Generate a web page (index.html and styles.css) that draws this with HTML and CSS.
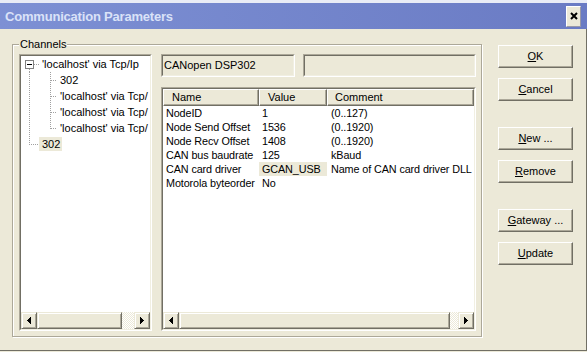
FILE: index.html
```
<!DOCTYPE html>
<html>
<head>
<meta charset="utf-8">
<link rel="stylesheet" href="styles.css">
</head>
<body>
<div class="window">
  <div class="titlebar">
    <span class="title">Communication Parameters</span>
    <span class="close"><svg width="8" height="8" viewBox="0 0 8 8"><path d="M1 1 L7 7 M7 1 L1 7" stroke="#000" stroke-width="2"/></svg></span>
  </div>
  <div class="main">
    <div class="group">
      <div class="group-label">Channels</div>
      <div class="group-body">
        <div class="tree sunken">
          <div class="sunken-in white">
            <div class="tree-items">
              <div class="node">
                <svg width="18" height="16" shape-rendering="crispEdges"><line x1="13" y1="8.5" x2="18" y2="8.5" class="dot"/><line x1="8.5" y1="13" x2="8.5" y2="16" class="dot"/><rect x="4.5" y="4.5" width="8" height="8" fill="#fff" stroke="#808080"/><rect x="6" y="8" width="5" height="1" fill="#000"/></svg>
                <span class="lbl">'localhost' via Tcp/Ip</span>
              </div>
              <div class="node">
                <svg width="36" height="16" shape-rendering="crispEdges"><line x1="8.5" y1="0" x2="8.5" y2="16" class="dot"/><line x1="29.5" y1="0" x2="29.5" y2="16" class="dot"/><line x1="30" y1="8.5" x2="36" y2="8.5" class="dot"/></svg>
                <span class="lbl">302</span>
              </div>
              <div class="node">
                <svg width="36" height="16" shape-rendering="crispEdges"><line x1="8.5" y1="0" x2="8.5" y2="16" class="dot"/><line x1="29.5" y1="0" x2="29.5" y2="16" class="dot"/><line x1="30" y1="8.5" x2="36" y2="8.5" class="dot"/></svg>
                <span class="lbl">'localhost' via Tcp/</span>
              </div>
              <div class="node">
                <svg width="36" height="16" shape-rendering="crispEdges"><line x1="8.5" y1="0" x2="8.5" y2="16" class="dot"/><line x1="29.5" y1="0" x2="29.5" y2="16" class="dot"/><line x1="30" y1="8.5" x2="36" y2="8.5" class="dot"/></svg>
                <span class="lbl">'localhost' via Tcp/</span>
              </div>
              <div class="node">
                <svg width="36" height="16" shape-rendering="crispEdges"><line x1="8.5" y1="0" x2="8.5" y2="16" class="dot"/><line x1="29.5" y1="0" x2="29.5" y2="9" class="dot"/><line x1="30" y1="8.5" x2="36" y2="8.5" class="dot"/></svg>
                <span class="lbl">'localhost' via Tcp/</span>
              </div>
              <div class="node">
                <svg width="18" height="16" shape-rendering="crispEdges"><line x1="8.5" y1="0" x2="8.5" y2="9" class="dot"/><line x1="10" y1="8.5" x2="18" y2="8.5" class="dot"/></svg>
                <span class="lbl sel">302</span>
              </div>
            </div>
            <div class="hscroll">
              <div class="sbtn"><svg width="4" height="7" shape-rendering="crispEdges"><rect x="0" y="3" width="1" height="1"/><rect x="1" y="2" width="1" height="3"/><rect x="2" y="1" width="1" height="5"/><rect x="3" y="0" width="1" height="7"/></svg></div>
              <div class="sbtn thumb-tree"></div>
              <div class="strack"></div>
              <div class="sbtn"><svg width="4" height="7" shape-rendering="crispEdges"><rect x="3" y="3" width="1" height="1"/><rect x="2" y="2" width="1" height="3"/><rect x="1" y="1" width="1" height="5"/><rect x="0" y="0" width="1" height="7"/></svg></div>
            </div>
          </div>
        </div>
        <div class="right">
          <div class="fields">
            <div class="field sunken"><div class="sunken-in field-in">CANopen DSP302</div></div>
            <div class="field wide sunken"><div class="sunken-in field-in"></div></div>
          </div>
          <div class="list sunken">
            <div class="sunken-in white">
              <div class="list-head">
                <div class="th c1">Name</div>
                <div class="th c2">Value</div>
                <div class="th c3">Comment</div>
              </div>
              <div class="rows">
                <div class="row"><div class="cell c1">NodeID</div><div class="cell c2">1</div><div class="cell c3">(0..127)</div></div>
                <div class="row"><div class="cell c1">Node Send Offset</div><div class="cell c2">1536</div><div class="cell c3">(0..1920)</div></div>
                <div class="row"><div class="cell c1">Node Recv Offset</div><div class="cell c2">1408</div><div class="cell c3">(0..1920)</div></div>
                <div class="row"><div class="cell c1">CAN bus baudrate</div><div class="cell c2">125</div><div class="cell c3">kBaud</div></div>
                <div class="row"><div class="cell c1">CAN card driver</div><div class="cell c2 hl">GCAN_USB</div><div class="cell c3">Name of CAN card driver DLL</div></div>
                <div class="row"><div class="cell c1">Motorola byteorder</div><div class="cell c2">No</div><div class="cell c3"></div></div>
              </div>
              <div class="hscroll">
                <div class="sbtn"><svg width="4" height="7" shape-rendering="crispEdges"><rect x="0" y="3" width="1" height="1"/><rect x="1" y="2" width="1" height="3"/><rect x="2" y="1" width="1" height="5"/><rect x="3" y="0" width="1" height="7"/></svg></div>
                <div class="sbtn thumb-list"></div>
                <div class="strack"></div>
                <div class="sbtn"><svg width="4" height="7" shape-rendering="crispEdges"><rect x="3" y="3" width="1" height="1"/><rect x="2" y="2" width="1" height="3"/><rect x="1" y="1" width="1" height="5"/><rect x="0" y="0" width="1" height="7"/></svg></div>
              </div>
            </div>
          </div>
        </div>
      </div>
    </div>
    <div class="buttons">
      <button class="btn"><u>O</u>K</button>
      <button class="btn"><u>C</u>ancel</button>
      <button class="btn sep"><u>N</u>ew ...</button>
      <button class="btn"><u>R</u>emove</button>
      <button class="btn sep"><u>G</u>ateway ...</button>
      <button class="btn"><u>U</u>pdate</button>
    </div>
  </div>
</div>
</body>
</html>
```
FILE: styles.css
```
body {
  margin: 0;
  background: #ece9d8;
  font: 11px/13px "Liberation Sans", Arial, sans-serif;
  color: #000;
}
.window {
  width: 587px;
  height: 351px;
  box-sizing: border-box;
  box-shadow: inset -1px -1px 0 #716f64;
}
.titlebar {
  height: 26px;
  border-top: 3px solid #e9ecf6;
  background: linear-gradient(to right, #7d90d4, #6a7bc4);
  display: flex;
  align-items: center;
  justify-content: space-between;
  padding: 0 6px 0 5px;
}
.title {
  font-weight: bold;
  font-size: 13px;
  letter-spacing: -0.2px;
  color: #dae2f8;
}
.close {
  width: 15px;
  height: 21px;
  box-sizing: border-box;
  background: #ece9d8;
  border: 1px solid;
  border-color: #fff #9a9aa8 #9a9aa8 #fff;
  display: flex;
  align-items: center;
  justify-content: center;
}
.close svg { display: block; }
.main {
  display: flex;
  align-items: flex-start;
  padding: 15px 0 0 12px;
}
.group {
  width: 470px;
  box-sizing: border-box;
  border: 1px solid #aca899;
  box-shadow: 1px 1px 0 #fff, inset 1px 1px 0 #fff;
  padding: 0 5px 5px 6px;
}
.group-label {
  width: max-content;
  margin-top: -7px;
  padding: 0 1px;
  background: #ece9d8;
  line-height: 13px;
}
.group-body {
  display: flex;
  gap: 9px;
  margin-top: 3px;
  height: 277px;
}
.sunken {
  box-sizing: border-box;
  border: 1px solid;
  border-color: #aca899 #fff #fff #aca899;
}
.sunken-in {
  height: 100%;
  box-sizing: border-box;
  border: 1px solid;
  border-color: #716f64 #f1efe2 #f1efe2 #716f64;
}
.white {
  background: #fff;
  display: flex;
  flex-direction: column;
}
.tree { width: 133px; }
.tree-items {
  flex: 1;
  overflow: hidden;
}
.node {
  height: 16px;
  display: flex;
  align-items: center;
  white-space: nowrap;
}
.node svg { flex: none; display: block; }
.dot {
  stroke: #a0a0a0;
  stroke-dasharray: 1 1;
}
.lbl {
  padding: 0 2px 0 3px;
  line-height: 14px;
}
.lbl.sel { background: #ece9d8; }
.hscroll {
  display: flex;
  height: 17px;
  flex: none;
}
.sbtn {
  width: 16px;
  flex: none;
  box-sizing: border-box;
  border: 1px solid;
  border-color: #ece9d8 #716f64 #716f64 #ece9d8;
  box-shadow: inset 1px 1px 0 #fff, inset -1px -1px 0 #aca899;
  background: #ece9d8;
  display: flex;
  align-items: center;
  justify-content: center;
}
.sbtn svg { display: block; }
.thumb-tree { width: 85px; }
.thumb-list { width: 271px; }
.strack {
  flex: 1;
  background: repeating-conic-gradient(#fff 0 25%, #ece9d8 0 50%) 0 0 / 2px 2px;
}
.right {
  width: 315px;
  display: flex;
  flex-direction: column;
}
.fields {
  display: flex;
  gap: 8px;
  height: 23px;
}
.field { width: 134px; }
.field.wide { flex: 1; }
.field-in {
  background: #ece9d8;
  display: flex;
  align-items: center;
  padding-left: 1px;
}
.list {
  margin-top: 10px;
  height: 244px;
}
.list-head {
  display: flex;
  height: 17px;
  flex: none;
}
.th {
  box-sizing: border-box;
  border: 1px solid;
  border-color: #fff #716f64 #716f64 #fff;
  box-shadow: inset -1px -1px 0 #aca899;
  background: #ece9d8;
  padding-left: 8px;
  line-height: 15px;
}
.c1 { width: 96px; flex: none; }
.c2 { width: 68px; flex: none; }
.c3 { flex: 1; }
.th.c3 { padding-left: 7px; }
.rows {
  flex: 1;
  overflow: hidden;
  font-size: 10.8px;
  letter-spacing: -0.1px;
}
.row {
  display: flex;
  height: 14px;
  line-height: 14px;
  white-space: nowrap;
}
.cell {
  overflow: hidden;
  box-sizing: border-box;
  padding-left: 3px;
}
.cell.c3 { padding-left: 4px; }
.hl { background: #ece9d8; }
.buttons {
  margin-left: 16px;
  margin-top: 1px;
  width: 75px;
  display: flex;
  flex-direction: column;
}
.btn {
  height: 23px;
  margin: 10px 0 0;
  padding: 0;
  box-sizing: border-box;
  border: 1px solid;
  border-color: #fff #716f64 #716f64 #fff;
  box-shadow: inset -1px -1px 0 #aca899;
  background: #ece9d8;
  font: inherit;
  color: #000;
  display: flex;
  align-items: center;
  justify-content: center;
}
.btn:first-child { margin-top: 0; }
.btn.sep { margin-top: 26px; }
```
